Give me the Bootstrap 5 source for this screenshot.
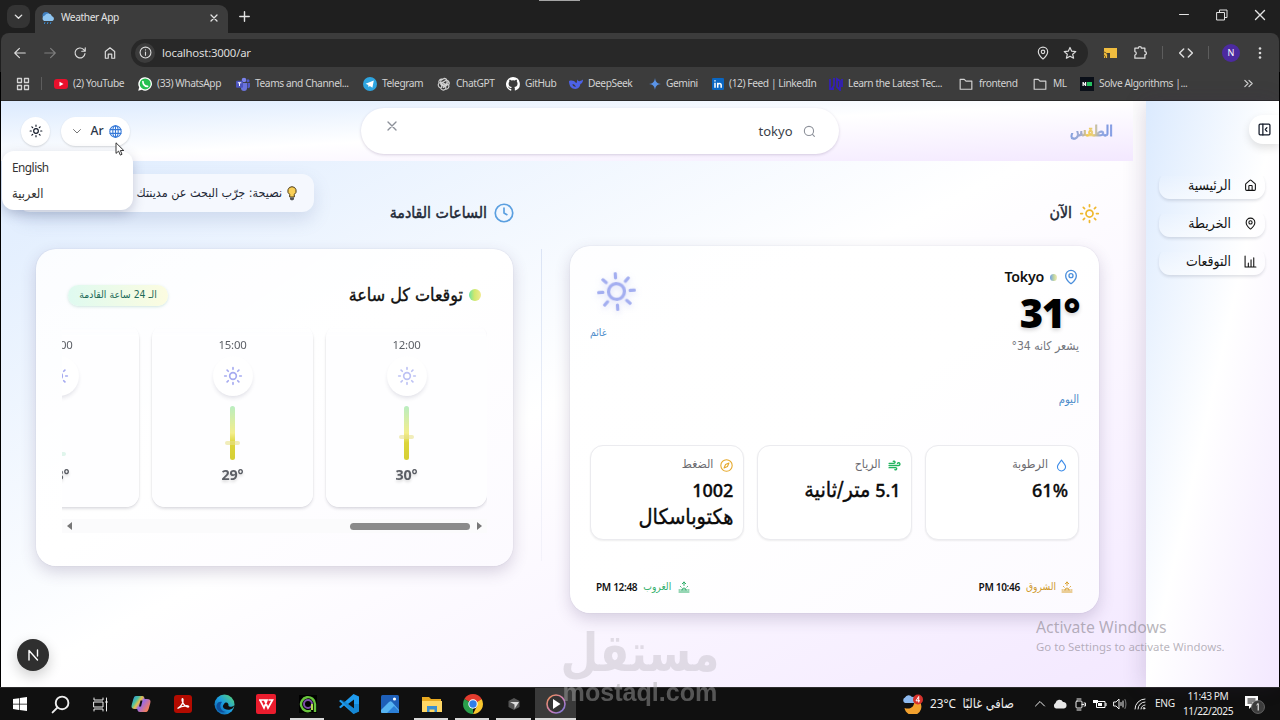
<!DOCTYPE html>
<html lang="ar">
<head>
<meta charset="utf-8">
<meta name="viewport" content="width=device-width, initial-scale=1">
<title>Weather App</title>
<link href="https://cdn.jsdelivr.net/npm/bootstrap@5.3.0/dist/css/bootstrap.min.css" rel="stylesheet">
<style>
:root{--ui:"Noto Sans","DejaVu Sans Condensed","DejaVu Sans",sans-serif;--ar:"DejaVu Sans Condensed","DejaVu Sans","Noto Sans",sans-serif}
html,body{height:720px;overflow:hidden}
body{width:1280px;background:#000;font-family:var(--ui);font-size:11px;line-height:1.3;color:#111827}
svg{display:block;flex:none}
.ln{fill:none;stroke:currentColor;stroke-width:2;stroke-linecap:round;stroke-linejoin:round}
.ar{font-family:var(--ar);direction:rtl;white-space:nowrap}
.nowrap{white-space:nowrap}
/* browser window */
.tabs{height:33px;background:#1f1f1f;color:#e3e3e3;padding-left:7px;position:relative}
.tabs .drop{width:23px;height:23px;border-radius:8px;background:#343434;margin-right:5px}
.tab-on{width:193px;height:28px;background:#3c3c3c;border-radius:9px 9px 0 0;margin-top:5px;padding:0 8px 2px 6px;font-size:10.2px;letter-spacing:-.4px}
.winbtns{gap:26px;padding-right:14px}
.grip{position:absolute;left:539px;top:0;width:41px;height:1px;background:#a5a5a5}
.tools{height:39px;background:#3c3c3c;border-radius:8px 8px 0 0;margin:0 1px;padding:0 11px 0 12px;color:#dcdcdc}
.omni{width:957px;height:28px;border-radius:14px;background:#282828;margin-left:14px;padding:0 11px 0 4px;font-size:11.4px;letter-spacing:-.22px}
.omni .info{width:20px;height:20px;border-radius:50%;background:#3c3c3c;margin-right:7px}
.vbar{width:1px;height:13px;background:#5d5d5d}
.avatar{width:18px;height:18px;border-radius:50%;background:#4c2aa0;color:#fff;font-size:9px}
.marks{height:29px;background:#3c3c3c;margin:0 1px;padding-left:15px;color:#d2d2d2;display:grid;align-items:center;letter-spacing:-.42px;
 grid-template-columns:38px 84px 98px 127px 74px 69px 63px 80px 63px 117px 130px 74px 47px 163px 20px;border-bottom:1px solid #2a2a2a;font-size:10.2px;padding-bottom:5px}
.marks>div{display:flex;align-items:center;gap:5px;white-space:nowrap}
.marks svg{width:14px;height:14px}
/* page */
.page{height:586px;margin:0 1px;background:#fff}
.grad{background:linear-gradient(to bottom right,#dbeafe,#fff 50%,#f3e8ff)}
.side{width:133px;padding:14px 14px 0 0;position:relative;box-shadow:-3px 0 20px rgba(60,40,90,.16);z-index:2}
.side .tog{position:absolute;right:0;top:14px;width:30px;height:29px;border-radius:14px 0 0 14px;background:#fff;box-shadow:0 4px 8px rgba(0,0,0,.12)}
.navs{gap:11px;padding-top:57px;display:flex;flex-direction:column;align-items:flex-start}
.navs a{width:106px;height:27px;border-radius:11px;box-shadow:0 2px 3px rgba(40,50,80,.14);background:linear-gradient(rgba(255,255,255,0),rgba(255,255,255,.45));color:#111;text-decoration:none;display:flex;align-items:center;gap:13px;padding-right:8px;font-size:13.9px}
.clip-top{clip-path:inset(4px -6px -6px -6px)}
.main{width:1145px;position:relative}
.top{width:1132px;height:60px;padding:0 20px 0 20px;position:relative;z-index:4;margin-right:13px}
.logo{width:44px;font-size:15px;line-height:30px;margin-top:-1px;background:linear-gradient(90deg,#7f9de0 0%,#9fa9cf 28%,#f1cb52 42%,#e8cd76 55%,#8aa2df 72%,#7b96e2);-webkit-background-clip:text;background-clip:text;color:transparent;-webkit-text-stroke:.8px transparent}
.find{width:478px;height:46px;border-radius:23px;background:#fff;box-shadow:0 1px 3px rgba(80,60,110,.22);color:#3b3f4a;font-size:13px;padding:0 23px 0 23px;direction:rtl}
.pill{height:29px;background:#fff;border-radius:15px;box-shadow:0 1px 2px rgba(0,0,0,.14)}
.lang{width:69px;padding:0 8px 0 10px;font-size:12.2px;color:#2b3648;direction:rtl}
.round{width:29px}
.langmenu{position:absolute;left:1px;top:50px;width:131px;height:59px;background:#fff;border-radius:12px;box-shadow:0 4px 12px rgba(50,60,100,.25);z-index:6;padding:6px 10px;font-size:11.8px;letter-spacing:-.5px;color:#333}
.langmenu div{height:27px;line-height:20px;text-align:left}
.tip{position:absolute;left:17px;top:73px;width:296px;height:38px;border-radius:12px;background:#f5f8fe;box-shadow:0 8px 18px rgba(90,110,160,.18);z-index:3;padding-right:17px;font-size:12.45px;direction:rtl;color:#1f2937}
.arrow{position:absolute;left:114px;top:41px;z-index:8}
.cols{padding:40px 47px 0 35px;display:flex;gap:28px;direction:rtl}
.now{width:529px}.hours{width:477px}
.h-sec{height:24px;gap:7px;font-size:15.8px;color:#1f2937;-webkit-text-stroke:.45px #1f2937}
.h-sec svg{-webkit-text-stroke:0}
.split{width:1px;height:312px;margin-top:48px;background:linear-gradient(#dbe4f5,rgba(225,225,240,.3))}
.panel{border-radius:20px;background:linear-gradient(to bottom right,rgba(255,255,255,.85),#fff 50%,#fcfaff);box-shadow:0 6px 16px rgba(70,50,100,.2),0 0 1px rgba(70,70,120,.3)}
.now .panel{height:367px;margin-top:21px;padding:22px 20px 0 20px}
.hours .panel{height:317px;margin-top:24px;padding:0 26px}
.city{font-size:14.2px;letter-spacing:-.25px;font-weight:600;color:#111;gap:6px;height:18px}
.dot{width:7px;height:7px;border-radius:50%;background:linear-gradient(90deg,#6d9fe8,#c5d9a0 60%,#f3e9b8)}
.deg{font-size:40px;font-weight:900;line-height:44px;color:#000;direction:ltr;text-align:right;text-shadow:0 2px 4px rgba(0,0,0,.18);margin-top:5px;letter-spacing:-1.5px;height:44px}
.feel{font-size:12.1px;color:#73767d;line-height:16px;margin-top:3px}
.blue{color:#4a8ac9}
.stats{gap:13px;margin-top:37px}
.stat{width:154.6px;height:95px;border-radius:13px;border:1px solid #ebebef;background:#fff;box-shadow:0 1px 2px rgba(0,0,0,.07);padding:10px 10px}
.stat .k{font-size:12.2px;color:#6b6b70;gap:7px;height:18px}
.stat .v{font-size:18px;line-height:27px;font-weight:500;color:#0a0a0a;margin-top:3px;-webkit-text-stroke:.35px #0a0a0a}
.stat .v .ar{font-size:21.5px;line-height:20px}
.suns{margin-top:39px;padding:0 6px;height:16px;font-size:10.2px}
.suns b{font:600 10.1px var(--ui);letter-spacing:-.35px;color:#111;direction:ltr}
.hh{height:38px;margin-top:27px;padding-right:6px;padding-left:6px}
.hh .t{font-size:17.8px;color:#111;-webkit-text-stroke:.35px #111;gap:6px}
.orb{width:12px;height:12px;border-radius:50%;background:linear-gradient(90deg,#6fe3a0,#cfe86f 45%,#f2ea90)}
.chip{width:100px;height:21px;border-radius:11px;background:linear-gradient(90deg,#dffaf0,#fcfce0);box-shadow:0 1px 3px rgba(70,160,130,.25);font-size:10.4px;color:#1e6a58}
.strip{gap:13px;overflow:hidden;height:190px;margin-top:11px;width:425px;-webkit-mask-image:linear-gradient(transparent,#000 14px);mask-image:linear-gradient(transparent,#000 14px)}
.hour{flex:0 0 161px;height:182px;border-radius:13px;background:rgba(254,254,255,.9);box-shadow:0 2px 3px rgba(60,60,90,.16),0 0 2px rgba(60,60,90,.08);color:#5c5f66;padding-top:10px}
.hour .hr{font-size:11.4px;letter-spacing:-.25px;line-height:20px;color:#5c5f66}
.hour .ic{width:40px;height:40px;border-radius:50%;background:#fff;box-shadow:0 3px 4px -1px rgba(50,50,90,.15);margin-top:1px;color:#a5aaf0}
.bar{width:5px;height:54px;border-radius:3px;margin-top:10px;position:relative;background:linear-gradient(#b9edc1,#f3ee8c 50%,#dcd53a 68%,#d6cf35)}
.bar i{position:absolute;left:-5px;width:15px;height:4px;border-radius:2px;background:rgba(232,225,140,.6)}
.hour .tt{font-size:14.3px;letter-spacing:-.2px;font-weight:700;line-height:20px;margin-top:5px;text-shadow:0 2px 3px rgba(0,0,0,.15)}
.sbar{height:14px;background:#fbfbfc;margin-top:4px;padding:0 5px;direction:ltr;width:425px}
.sbar .th{width:120px;height:7px;border-radius:4px;background:#8b8b8b;margin-left:auto;margin-right:7px}
.nbtn{position:absolute;left:16px;top:538px;width:32px;height:32px;border-radius:50%;background:#2f2f2f;color:#fff;box-shadow:0 5px 14px rgba(0,0,0,.2)}
.act{position:absolute;left:1036px;top:616px;z-index:9;color:rgba(125,120,130,.55);white-space:nowrap}
.act .a1{font-size:15.8px;line-height:22px}.act .a2{font-size:11.4px;line-height:17px}
.wm{position:absolute;left:550px;top:630px;width:180px;z-index:10;text-align:center;direction:ltr}
.wm .w1{font:700 43.5px/46px "DejaVu Sans",sans-serif;color:#a8a4ac;opacity:.3;direction:rtl;white-space:nowrap;display:flex;justify-content:center;height:46px;transform:scaleY(1.2)}
.wm .w2{font:700 25.1px/24px "Liberation Sans",sans-serif;color:#aaa;opacity:.46;margin-top:4px}
/* taskbar */
.task{height:33px;background:#101010;border-top:1px solid #2c2c2c;color:#eee;display:grid;grid-template-columns:40px 40px 40px 42px 42px 41px 42px 41px 41px 42px 41px 41px 42px 41px 1fr;direction:ltr}
.task>div{display:flex;align-items:center;justify-content:center}
.task .open{position:relative}
.task .open::after{content:"";position:absolute;bottom:0;left:3px;right:4px;height:2px;background:#d8d8d8}
.task .lit{background:#3a3a3a}.task .lit::after{left:0;right:0}
.tray{justify-content:flex-start!important;padding-left:327px}
</style>
</head>
<body>
<svg width="0" height="0" class="position-absolute">
<defs>
<symbol id="sun" viewBox="0 0 24 24"><circle cx="12" cy="12" r="4"/><path d="M12 2v2M12 20v2M4.93 4.93l1.41 1.41M17.66 17.66l1.41 1.41M2 12h2M20 12h2M6.34 17.66l-1.41 1.41M19.07 4.93l-1.41 1.41"/></symbol>
<symbol id="sunbig" viewBox="0 0 24 24"><circle cx="12" cy="12" r="4.900"/><path d="M12 1v2.600M12 20.400v2.600M4.220 4.220l1.840 1.840M17.940 17.940l1.840 1.840M1 12h2.600M20.400 12h2.600M6.060 17.940l-1.840 1.840M19.780 4.220l-1.840 1.840"/></symbol>
<symbol id="pin" viewBox="0 0 24 24"><path d="M20 10c0 5-5.500 10.200-7.400 11.800a1 1 0 0 1-1.200 0C9.500 20.200 4 15 4 10a8 8 0 0 1 16 0"/><circle cx="12" cy="10" r="3"/></symbol>
<symbol id="x" viewBox="0 0 24 24"><path d="M18 6 6 18M6 6l12 12"/></symbol>
<symbol id="chev" viewBox="0 0 24 24"><path d="m5 9 7 7 7-7"/></symbol>
<symbol id="home" viewBox="0 0 24 24"><path d="M15 21v-8a1 1 0 0 0-1-1h-4a1 1 0 0 0-1 1v8"/><path d="M3 10a2 2 0 0 1 .7-1.500l7-6a2 2 0 0 1 2.600 0l7 6A2 2 0 0 1 21 10v9a2 2 0 0 1-2 2H5a2 2 0 0 1-2-2z"/></symbol>
<symbol id="folder" viewBox="0 0 24 24"><path d="M2 4h7l3 3h10v14H2z"/></symbol>
<symbol id="rise" viewBox="0 0 24 24"><path d="M12 2v7M8.500 5.500 12 2l3.500 3.500M4.900 10.900l1.400 1.400M2 18h2M20 18h2M19.100 10.900l-1.400 1.400M22 22H2M16 18a4 4 0 0 0-8 0M6 18h12"/></symbol>
<linearGradient id="gC" x1="0" x2="1" y1="0" y2=".6"><stop stop-color="#2a86e8"/><stop offset=".3" stop-color="#4cc0a0"/><stop offset=".45" stop-color="#e8c04a"/><stop offset=".6" stop-color="#9a6ae8"/><stop offset="1" stop-color="#f5805a"/></linearGradient>
<linearGradient id="gE" x1="0" x2="1" y1="1" y2="0"><stop stop-color="#0c59a4"/><stop offset=".5" stop-color="#1b9de2"/><stop offset="1" stop-color="#5fdc6a"/></linearGradient>
<linearGradient id="gM" x1="0" x2="1" y1="0" y2="1"><stop stop-color="#f09050"/><stop offset=".6" stop-color="#c77cc0"/><stop offset="1" stop-color="#6a78d8"/></linearGradient>
</defs></svg>

<!-- tab strip -->
<div class="tabs d-flex align-items-center">
 <div class="grip"></div>
 <div class="drop d-flex align-items-center justify-content-center"><svg class="ln" width="11" height="11" style="stroke-width:3"><use href="#chev"/></svg></div>
 <div class="tab-on d-flex align-items-center">
  <svg width="14" height="14" viewBox="0 0 14 14"><circle cx="5" cy="4.500" r="3.500" fill="#3f7fc0"/><path d="M3 10a3 3 0 0 1 .8-5.500 4 4 0 0 1 7.200.8A2.500 2.500 0 0 1 11.500 10z" fill="#8fc6f2"/><path d="m4 11-.7 2M7 11l-.7 2M10 11l-.7 2" stroke="#3a86c8"/></svg>
  <span class="nowrap" style="margin-left:6px">Weather App</span>
  <svg class="ln ms-auto" width="12" height="12" style="stroke-width:2.600"><use href="#x"/></svg>
 </div>
 <svg class="ln ms-2" width="17" height="17" viewBox="-6 -6 36 36" style="stroke-width:3"><path d="M12 2v20M2 12h20"/></svg>
 <div class="winbtns d-flex align-items-center ms-auto" style="margin-bottom:3px">
  <svg width="12" height="12" class="ln" viewBox="0 0 12 12" style="stroke-width:1"><path d="M1.500 5.500h9"/></svg>
  <svg width="12" height="12" class="ln" viewBox="0 0 12 12" style="stroke-width:1"><path d="M1 3.500h7.500V11H1zM3.500 3.500V1H11v7.500H8.500"/></svg>
  <svg width="12" height="12" class="ln" viewBox="0 0 12 12" style="stroke-width:1.400"><path d="m1.500 1.500 9 9M10.500 1.500l-9 9"/></svg>
 </div>
</div>
<div class="bg-black"><div style="background:#1f1f1f">
<div class="tools d-flex align-items-center">
 <svg class="ln" width="14" height="14" viewBox="0 0 24 24"><path d="M21 12H3m8-8-8 8 8 8"/></svg>
 <svg class="ln" width="14" height="14" viewBox="0 0 24 24" style="margin-left:16px;color:#7e7e7e"><path d="M3 12h18m-8-8 8 8-8 8"/></svg>
 <svg class="ln" width="14" height="14" viewBox="0 0 24 24" style="margin-left:16px"><path d="M20.500 13a8.500 8.500 0 1 1-2.500-7.200L21 9M21 3v6h-6"/></svg>
 <svg class="ln" width="14" height="14" viewBox="0 0 24 24" style="margin-left:16px"><path d="M4 9.500 12 3l8 6.500V21h-5v-7H9v7H4z"/></svg>
 <div class="omni d-flex align-items-center">
  <span class="info d-flex align-items-center justify-content-center"><svg class="ln" width="13" height="13" viewBox="0 0 24 24"><circle cx="12" cy="12" r="10"/><path d="M12 11v6M12 7v.5"/></svg></span>
  <span class="nowrap" style="padding-top:2px">localhost:3000/ar</span>
  <svg class="ln ms-auto" width="14" height="14"><use href="#pin"/></svg>
  <svg class="ln" width="14" height="14" viewBox="0 0 24 24" style="margin-left:13px"><path d="m12 2.500 2.900 6.400 7 .7-5.300 4.600 1.600 6.800-6.200-3.600L5.800 21l1.600-6.800L2.100 9.600l7-.7z"/></svg>
 </div>
 <svg width="14" height="10" viewBox="0 0 14 10" style="margin-left:15px"><path fill="#f0bd3f" d="M1 0h13v10H7V5H4v5H1z"/><path d="M0 4c3 0 5 2 5 6M0 7c2 0 2.500 1 2.500 3" stroke="#6b5420" fill="none"/></svg>
 <svg class="ln" width="15" height="15" viewBox="0 0 24 24" style="margin-left:16px"><path d="M3 5h5.500a2.500 2.500 0 0 1 5 0H19v5.500a2.500 2.500 0 0 1 0 5V21H3v-5a2.800 2.800 0 0 0 0-5.500z"/></svg>
 <span class="vbar" style="margin-left:14px"></span>
 <svg class="ln" width="14" height="14" viewBox="0 0 24 24" style="margin-left:16px;stroke-width:2.500"><path d="m8 5-7 7 7 7M16 5l7 7-7 7"/></svg>
 <span class="vbar" style="margin-left:15px"></span>
 <span class="avatar d-flex align-items-center justify-content-center" style="margin-left:13px">N</span>
 <svg width="4" height="14" viewBox="0 0 4 14" fill="#dcdcdc" class="ms-auto" style="margin-right:6px"><circle cx="2" cy="2.500" r="1.300"/><circle cx="2" cy="7" r="1.300"/><circle cx="2" cy="11.500" r="1.300"/></svg>
</div></div></div>
<div class="marks">
 <div><svg class="ln" viewBox="0 0 14 14" style="stroke-width:1.300"><path d="M1.500 1.500h4v4h-4zM8.500 1.500h4v4h-4zM1.500 8.500h4v4h-4zM8.500 8.500h4v4h-4z"/></svg><span class="vbar" style="margin-left:6px"></span></div>
 <div><svg viewBox="0 0 14 14"><rect y="2" width="14" height="10" rx="3" fill="#e8102c"/><path fill="#fff" d="m5.500 4.800 4 2.200-4 2.200z"/></svg>(2) YouTube</div>
 <div><svg viewBox="0 0 14 14"><path fill="#fff" d="M7.200.2a6.700 6.700 0 1 1-3.300 12.500L.2 13.800l1-3.600A6.700 6.700 0 0 1 7.200.2"/><circle cx="7.200" cy="6.900" r="5.500" fill="#25c050"/><path fill="none" stroke="#fff" stroke-width="1.700" stroke-linecap="round" d="M4.900 4.500c0 3 2.200 5 4.700 4.900"/></svg>(33) WhatsApp</div>
 <div><svg viewBox="0 0 14 14"><circle cx="8" cy="3" r="2.300" fill="#7b83eb"/><circle cx="12" cy="3.800" r="1.500" fill="#5059c9"/><path fill="#6a73dc" d="M5 6h6v5a3 3 0 0 1-6 0z"/><path fill="#5059c9" d="M11.500 6H14v3.500a2 2 0 0 1-2.500 1.500z"/><rect y="3.800" width="7" height="7" rx="1" fill="#4b53bc"/><path stroke="#fff" d="M1.800 5.800h3.500M3.500 5.800V9"/></svg>Teams and Channel...</div>
 <div><svg viewBox="0 0 14 14"><circle cx="7" cy="7" r="7" fill="#2ea5e0"/><path fill="#fff" d="m2.600 6.800 8.200-3.200-1.400 7.200-2.600-1.900-1.200 1.300-.4-2.300z"/></svg>Telegram</div>
 <div><svg class="ln" viewBox="0 0 24 24"><path d="M12 2.500a5 5 0 0 1 5 3.200 5 5 0 0 1 3 8 5 5 0 0 1-5.500 7 5 5 0 0 1-8.500-2 5 5 0 0 1-2.500-8.300A5 5 0 0 1 9 3.600M8 18v-8l7-4M17 6v8l-6 4M5 10l7 4 7-4M12 2.500 6.500 6v7l6 3.500 6-3.500M9 9.500l6 3.500v7"/></svg>ChatGPT</div>
 <div><svg viewBox="0 0 16 16" fill="#fff"><path d="M8 0a8 8 0 0 0-2.500 15.600c.4.100.5-.2.500-.4v-1.500c-2 .4-2.600-.9-2.700-1-.1-.3-.5-1-.8-1.200-.3-.1-.7-.5 0-.5s1.100.6 1.200.8c.8 1.300 1.900.9 2.400.7.100-.5.300-.9.500-1.100-1.800-.2-3.600-.9-3.600-4 0-.8.300-1.500.8-2.100 0-.2-.3-1 .1-2.100 0 0 .7-.200 2.200.8a7.500 7.500 0 0 1 4 0c1.500-1 2.200-.8 2.200-.8.400 1.100.1 1.900.1 2.100.5.600.8 1.300.8 2.100 0 3.100-1.900 3.800-3.700 4 .3.300.6.800.6 1.500v2.200c0 .2.100.5.500.4A8 8 0 0 0 8 0"/></svg>GitHub</div>
 <div><svg viewBox="0 0 14 14" fill="#4d62e8"><path d="M0 4c3-1 5-.5 7 2 1 .5 1-2 1-3.500C9 4 10 4.500 11 4c1-.3 2-.7 3-1.500 0 2.500-1 4-2.600 4.600-.4 3-2 4.700-5 4.900C2.500 12 0 9 0 4"/><path fill="#3c3c3c" d="M3.500 7c1.500.2 2.500 1.200 3.500 2.700C5 10 3.500 9 3.500 7"/></svg><span>DeepSeek</span></div>
 <div><svg viewBox="0 0 14 14" style="width:12px"><path fill="#5a94e8" d="M7 0c.5 4.500 2.500 6.500 7 7-4.500.5-6.500 2.500-7 7-.5-4.500-2.500-6.500-7-7 4.500-.5 6.500-2.500 7-7"/></svg>Gemini</div>
 <div><svg viewBox="0 0 14 14" style="width:12px;height:12px"><rect width="14" height="14" rx="1.500" fill="#0a66c2"/><path stroke="#fff" stroke-width="1.800" fill="none" d="M3.500 5.500v6M3.500 2.500v1.700M6.700 11.500v-6M6.700 8c0-2 4-2.500 4 .5v3"/></svg>(12) Feed | LinkedIn</div>
 <div><svg viewBox="0 0 14 14"><path fill="none" stroke="#3320b8" stroke-width="1.800" d="M1 2v10h4M5 1v7c0 2-2 2-2 4M8 2v8l3 3V4zM13 2v8"/></svg>Learn the Latest Tec...</div>
 <div><svg class="ln"><use href="#folder"/></svg><span style="margin-left:1px">frontend</span></div>
 <div><svg class="ln"><use href="#folder"/></svg><span style="margin-left:1px">ML</span></div>
 <div><svg viewBox="0 0 14 14"><rect width="14" height="14" fill="#0a0f18"/><path fill="#fff" d="M2.500 5h1l1.500 2V5h1.200v4h-1L3.700 7v2H2.500z"/><rect x="7" y="5" width="5" height="4" fill="#25c060"/></svg>Solve Algorithms |...</div>
 <div><svg class="ln" viewBox="0 0 24 24" style="width:11px;height:11px;stroke-width:2.500"><path d="m4 5 7 7-7 7M13 5l7 7-7 7"/></svg></div>
</div>

<!-- web page -->
<div class="page d-flex">
 <div class="main grad">
  <div class="top grad d-flex align-items-center justify-content-between" dir="rtl">
   <div class="logo ar">الطقس</div>
   <div class="find d-flex align-items-center">
    <svg class="ln" width="13" height="13" viewBox="0 0 24 24" style="color:#8c9099"><circle cx="11" cy="11" r="8.500"/><path d="m21 21-3.500-3.500"/></svg>
    <span style="margin-right:10px">tokyo</span>
    <svg class="ln" width="16" height="16" style="margin-right:auto;margin-bottom:10px;color:#8c9099"><use href="#x"/></svg>
   </div>
   <div class="d-flex" style="gap:11px">
    <div class="pill lang d-flex align-items-center justify-content-between">
     <svg class="ln" width="13" height="13" viewBox="0 0 24 24" style="color:#3478d8"><circle cx="12" cy="12" r="10.500"/><ellipse cx="12" cy="12" rx="5" ry="10.500"/><path d="M2 8.500h20M2 15.500h20M12 2v20"/></svg>
     <span style="font-weight:500;margin-left:2px">Ar</span>
     <svg class="ln" width="12" height="12" style="color:#777"><use href="#chev"/></svg>
    </div>
    <div class="pill round d-flex align-items-center justify-content-center"><svg class="ln" width="14" height="14"><use href="#sun"/></svg></div>
   </div>
  </div>
  <div class="langmenu"><div>English</div><div class="ar" style="font-size:12.800px;letter-spacing:0">العربية</div></div>
  <svg class="arrow" width="10" height="14" viewBox="0 0 10 14"><path d="M1 .8v10.600l2.600-2.300 1.700 4 1.700-.8-1.600-3.800h3.400z" fill="#fff" stroke="#222" stroke-width=".9"/></svg>
  <div class="tip d-flex align-items-center ar">
   <svg width="10" height="15" viewBox="0 0 10 15"><path d="M5 .7a4.200 4.200 0 0 1 2.300 7.700V11H2.700V8.400A4.200 4.200 0 0 1 5 .7" fill="#f9cf57" stroke="#4b3a1a"/><path d="M3 11.500h4v2L5 14.500l-2-1z" fill="#555"/></svg>
   <span style="margin-right:5px">نصيحة: جرّب البحث عن مدينتك</span>
  </div>
  <div class="cols">
   <div class="now">
    <div class="h-sec d-flex align-items-center"><svg class="ln" width="21" height="21" style="color:#efb82e;margin-right:-1px"><use href="#sun"/></svg><span class="ar">الآن</span></div>
    <div class="panel">
     <div class="d-flex justify-content-between" style="height:118px">
      <div>
       <div class="city d-flex align-items-center"><svg class="ln" width="16" height="16" style="color:#4b8fdc"><use href="#pin"/></svg><span class="dot"></span><span>Tokyo</span></div>
       <div class="deg">31°</div>
       <div class="feel ar">يشعر كانه 34°</div>
      </div>
      <div class="d-flex flex-column align-items-end">
       <svg class="ln" width="39" height="39" style="color:#a3aef0;margin:4px 0 0 7px;transform:rotate(-4deg);filter:drop-shadow(0 2px 3px rgba(120,130,230,.3))"><use href="#sunbig"/></svg>
       <span class="ar blue" style="font-size:10.400px;margin-top:15px">غائم</span>
      </div>
     </div>
     <div class="ar blue" style="font-size:11.200px;height:22px;padding-top:7px">اليوم</div>
     <div class="stats d-flex">
      <div class="stat"><div class="k d-flex align-items-center"><svg class="ln" width="13" height="13" viewBox="0 0 24 24" style="color:#3b8be8"><path d="M12 22a7.500 7.500 0 0 0 7.500-7.500C19.500 10 15 7 12 2 9 7 4.500 10 4.500 14.500A7.500 7.500 0 0 0 12 22"/></svg><span class="ar">الرطوبة</span></div><div class="v" dir="ltr" style="text-align:right">61%</div></div>
      <div class="stat"><div class="k d-flex align-items-center"><svg class="ln" width="13" height="13" viewBox="0 0 24 24" style="color:#22b45e;stroke-width:2.600"><path d="M12.800 19.600A2 2 0 1 0 14 16H2M17.500 8a2.500 2.500 0 1 1 2 4H2M9.800 4.400A2 2 0 1 1 11 8H2"/></svg><span class="ar">الرياح</span></div><div class="v">5.1 <span class="ar">متر/ثانية</span></div></div>
      <div class="stat"><div class="k d-flex align-items-center"><svg class="ln" width="13" height="13" viewBox="0 0 24 24" style="color:#e5a82a"><circle cx="12" cy="12" r="10.500"/><path d="m16.500 7.500-2.700 6.300-6.300 2.700 2.700-6.300z"/></svg><span class="ar">الضغط</span></div><div class="v">1002 <span class="ar">هكتوباسكال</span></div></div>
     </div>
     <div class="suns d-flex align-items-center">
      <svg class="ln" width="12" height="12" style="color:#d9a02f"><use href="#rise"/></svg><span class="ar" style="color:#d09a2c;margin:0 5px 0 6px">الشروق</span><b>PM 10:46</b>
      <svg class="ln" width="12" height="12" style="color:#2fae6a;margin-right:auto"><use href="#rise"/></svg><span class="ar" style="color:#2fae6a;margin:0 7px 0 6px">الغروب</span><b>PM 12:48</b>
     </div>
    </div>
   </div>
   <div class="split"></div>
   <div class="hours">
    <div class="h-sec d-flex align-items-center"><svg class="ln" width="20" height="20" viewBox="0 0 24 24" style="color:#5a9fe0;margin-right:-1px"><circle cx="12" cy="12" r="10.500"/><path d="M12 6v6l3.500 2"/></svg><span class="ar">الساعات القادمة</span></div>
    <div class="panel d-flex flex-column">
     <div class="hh d-flex align-items-center justify-content-between">
      <div class="t d-flex align-items-center"><span class="orb"></span><span class="ar">توقعات كل ساعة</span></div>
      <div class="chip ar d-flex align-items-center justify-content-center"><span>الـ 24 ساعة القادمة</span></div>
     </div>
     <div class="strip d-flex">
      <div class="hour d-flex flex-column align-items-center"><div class="hr m-0 border-0" style="opacity:1">12:00</div><div class="ic d-flex align-items-center justify-content-center"><svg class="ln" width="20" height="20" style="color:#bdc2f4"><use href="#sun"/></svg></div><div class="bar"><i style="top:29px"></i></div><div class="tt" dir="ltr">30°</div></div>
      <div class="hour d-flex flex-column align-items-center"><div class="hr">15:00</div><div class="ic d-flex align-items-center justify-content-center"><svg class="ln" width="20" height="20"><use href="#sun"/></svg></div><div class="bar"><i style="top:35px"></i></div><div class="tt" dir="ltr">29°</div></div>
      <div class="hour d-flex flex-column align-items-center"><div class="hr">18:00</div><div class="ic d-flex align-items-center justify-content-center"><svg class="ln" width="20" height="20"><use href="#sun"/></svg></div><div class="bar" style="background:none"><i style="top:46px;background:#e0f5ec"></i></div><div class="tt" dir="ltr">28°</div></div>
     </div>
     <div class="sbar d-flex align-items-center"><svg width="5" height="8" viewBox="0 0 5 8" fill="#777"><path d="M5 0v8L0 4z"/></svg><div class="th"></div><svg width="5" height="8" viewBox="0 0 5 8" fill="#777"><path d="M0 0v8l5-4z"/></svg></div>
    </div>
   </div>
  </div>
  <div class="nbtn d-flex align-items-center justify-content-center"><svg class="ln" width="11" height="12" viewBox="0 0 11 12" style="stroke-width:1.400"><path d="M1 11V1.500L9.500 11M9.500 1v6"/></svg></div>
 </div>
 <div class="side grad">
  <div class="tog d-flex align-items-center justify-content-center"><svg class="ln" width="13" height="13" viewBox="0 0 24 24" style="stroke-width:2.300"><rect x="2" y="2" width="20" height="20" rx="2"/><path d="M9 2v20M16.500 8.500 13.500 12l3 3.500"/></svg></div>
  <div class="navs" dir="rtl">
   <a class="clip-top" href="#"><svg class="ln" width="13" height="13"><use href="#home"/></svg><span class="ar">الرئيسية</span></a>
   <a class="clip-top" href="#"><svg class="ln" width="13" height="13"><use href="#pin"/></svg><span class="ar">الخريطة</span></a>
   <a class="clip-top" href="#"><svg class="ln" width="13" height="13" viewBox="0 0 24 24"><path d="M2 2v20h20M8 21v-6M13 21V9M18 21V5"/></svg><span class="ar">التوقعات</span></a>
  </div>
 </div>
</div>

<!-- taskbar -->
<div class="task">
 <div><svg width="14" height="14" viewBox="0 0 14 14" fill="#fff"><path d="M0 2 6 1.200V6.700H0zM6.700 1 14 0v6.700H6.700zM0 7.400h6v5.500L0 12zM6.700 7.400H14V14l-7.300-1z"/></svg></div>
 <div><svg class="ln" width="19" height="19" viewBox="0 0 24 24" style="stroke-width:2.400"><circle cx="14" cy="10" r="8"/><path d="M8 16l-6 6"/></svg></div>
 <div><svg class="ln" width="15" height="15" viewBox="0 0 15 15" style="stroke-width:1"><path d="M1 1v2h9V1M1 14v-2h9v2M1 5h9v5H1zM13.500 1v13M12.500 5h2"/></svg></div>
 <div><svg width="20" height="20" viewBox="0 0 20 20"><path fill="url(#gC)" d="M5 2h6c2 0 2.200 1 2.700 3H16c3 0 4 1.500 3.300 4l-1.500 5.500C17 17.500 16 18 14 18H9c-2 0-2.300-1-2.800-3H4c-3 0-4-1.500-3.300-4l1.500-5.500C3 3 3.500 2 5 2"/><path fill="#101010" d="M9.500 6.500h2l-1.500 6H8z"/></svg></div>
 <div><svg width="18" height="18" viewBox="0 0 18 18"><rect width="18" height="18" rx="3" fill="#b30b00"/><path fill="none" stroke="#fff" stroke-width="1.300" d="M3.500 13.500c4-2 6-6 5.500-9-.5-2-1.500 0-.5 2.500s3 4.500 5.500 5c1.500 0 .5-1.500-2-1.200-3 .2-6 1-8.500 2.700"/></svg></div>
 <div><svg width="21" height="21" viewBox="0 0 21 21"><circle cx="10.500" cy="10.500" r="10" fill="url(#gE)"/><path fill="#101010" d="M10 10c2-3 5-1 4.500 2 .8 1.200 3.500 1 6-.8L19 14c-3 3-9 2-10-1-.3-1 .2-2.200 1-3"/><path fill="#0d4f9c" d="M8 8c-3 3-2 9 4 10-7 2-11-4-9-8 1-2 3-2.500 5-2"/></svg></div>
 <div><svg width="20" height="20" viewBox="0 0 20 20"><rect width="20" height="20" rx="2" fill="#ea1c2d"/><path fill="none" stroke="#fff" stroke-width="1.700" d="M3 6h8l-3 8-4-8M8.500 6l3.500 8 4.500-8h-4"/></svg></div>
 <div class="open"><svg width="18" height="18" viewBox="0 0 18 18"><rect width="18" height="18" fill="#000"/><path fill="none" stroke="#68c43c" stroke-width="2.400" d="M16 17V9a7 7 0 1 0-4 6.500"/><circle cx="9" cy="9" r="4" fill="none" stroke="#7b4ca8" stroke-width="2"/><path stroke="#b7dc55" stroke-width="2" d="M13 9v6"/></svg></div>
 <div><svg width="20" height="20" viewBox="0 0 20 20"><path fill="#1f9cf0" d="m14.500 0 5.500 2.500v15L14.500 20 5 11.500l-3.300 2.700L0 13l3.400-3L0 7l1.700-1.200L5 8.500zM15 5.500 9 10l6 4.500z"/><path fill="#0b72b8" d="m14.500 20L20 17.500V10h-5v4.500L5 6.500 1.700 5.800z" opacity=".5"/></svg></div>
 <div><svg width="18" height="18" viewBox="0 0 18 18"><rect width="18" height="18" rx="1.500" fill="#1e5fb8"/><path fill="#56b4f2" d="m0 15 8-8c1.500-1.300 2-1 3 0l7 8v1.500c0 1-.5 1.500-1.500 1.500h-15C.5 18 0 17.500 0 16.500z"/><path fill="#2c80d8" d="m6 18 7-7 5 5v2z"/><circle cx="13.500" cy="4" r="1.600" fill="#fff"/></svg></div>
 <div class="open"><svg width="20" height="17" viewBox="0 0 20 17"><path fill="#e8a920" d="M0 1h7l2 2h10v4H0z"/><path fill="#ffd765" d="M0 5h20v11H0z"/><path fill="#3c8fd0" d="M5 16v-6h10v6h-2.500v-2.500h-5V16z"/></svg></div>
 <div class="open"><svg width="20" height="20" viewBox="0 0 20 20"><path fill="#e33b2e" d="M10 10 1.340 5A10 10 0 0 1 18.660 5z"/><path fill="#2a9f4b" d="M10 10v10A10 10 0 0 1 1.340 5z"/><path fill="#f9c72e" d="M10 10l8.660-5A10 10 0 0 1 10 20l4-8z"/><path fill="#e33b2e" d="M10 5h8.700L14 8z"/><circle cx="10" cy="10" r="4.700" fill="#fff"/><circle cx="10" cy="10" r="3.700" fill="#2f7de8"/></svg></div>
 <div class="open"><svg width="12" height="12" viewBox="0 0 12 12"><path fill="#555" d="m6 0 5.500 3v6L6 12 .5 9V3z"/><path fill="#ddd" d="M2 4h9L6.500 11V6.500z"/></svg></div>
 <div class="open lit"><svg width="20" height="20" viewBox="0 0 20 20"><circle cx="10" cy="10" r="9" fill="#333" stroke="url(#gM)" stroke-width="1.600"/><path fill="#fff" d="m7 5 7.500 5L7 15z"/></svg></div>
 <div class="tray">
  <svg width="21" height="20" viewBox="0 0 21 20"><path fill="#f2a12e" d="M17 8a8.500 8.500 0 1 1-15.500 6c6 2 10-1 10-8z"/><path fill="#8db9ee" d="M2 9a3 3 0 0 1 0-5.500A4 4 0 0 1 9 3a3 3 0 0 1 1.500 6z"/><circle cx="15" cy="5.500" r="5" fill="#d5322c"/><path stroke="#fff" fill="none" d="M15.700 8.500v-6L13 6.800h4"/></svg>
  <span class="nowrap" style="font-size:11.800px;margin-left:6px;width:25px">23°C</span><span class="ar" style="font-size:12.700px;width:59px">صافي غالبًا</span>
  <svg class="ln" width="12" height="12" viewBox="0 0 24 24" style="margin-left:20px"><path d="m3 16 9-9 9 9"/></svg>
  <svg width="14" height="10" viewBox="0 0 14 10" style="margin-left:7px"><path fill="#e8e8e8" d="M3 9.500A3 3 0 0 1 2.500 4 4 4 0 0 1 10 3a3.300 3.300 0 0 1 1 6.500z"/></svg>
  <svg class="ln" width="11" height="13" viewBox="0 0 11 13" style="stroke-width:1;margin-left:8px"><rect x="1" y="3" width="6" height="7" rx="1"/><path d="M2 1h4M2 12h4M9 5h1.500v3H9M7 6.500h2"/></svg>
  <svg width="14" height="12" viewBox="0 0 14 12" style="margin-left:7px"><path fill="none" stroke="#fff" d="M3.500 3.500h8.500v6H3.500zM13 5v3"/><path fill="#fff" d="M0 2h5v3H0zM5 5h4v3H5z"/></svg>
  <svg class="ln" width="14" height="12" viewBox="0 0 14 12" style="stroke-width:1;margin-left:6px"><path d="M1 4h2l3-3v10L3 8H1zM8 4.500v3M10 3v6"/><path d="M12 1.500c1.300 3 1.300 6 0 9" opacity=".5"/></svg>
  <svg class="ln" width="12" height="12" viewBox="0 0 12 12" style="stroke-width:1;margin-left:7px"><path d="M1 11A10 10 0 0 1 11 1M4 11a7 7 0 0 1 7-7M7 11a4 4 0 0 1 4-4"/><circle cx="10" cy="10.300" r=".8"/></svg>
  <span style="font-size:10.200px;letter-spacing:-.3px;margin-left:9px;width:20px">ENG</span>
  <div class="nowrap d-flex flex-column align-items-center" style="font-size:10.200px;letter-spacing:-.400px;line-height:15px;width:50px;margin-left:8px"><span>11:43 PM</span><span>11/22/2025</span></div>
  <svg width="22" height="20" viewBox="0 0 22 20" style="margin-left:11px"><path fill="#fff" d="M1 2h13v10H8l-3 3v-3H1z"/><path stroke="#101010" d="M3.500 5h8M3.500 7h8M3.500 9h5"/><circle cx="14" cy="13" r="6.500" fill="#3d3d3d" stroke="#888" stroke-width=".6"/><path d="m12.500 11 1.700-1.500v7" fill="none" stroke="#fff"/></svg>
 </div>
</div>
<div class="act"><div class="a1">Activate Windows</div><div class="a2">Go to Settings to activate Windows.</div></div>
<div class="wm"><div class="w1"><span>مستقل</span></div><div class="w2">mostaql.com</div></div>
<script src="https://cdn.jsdelivr.net/npm/bootstrap@5.3.0/dist/js/bootstrap.bundle.min.js"></script>
</body>
</html>
